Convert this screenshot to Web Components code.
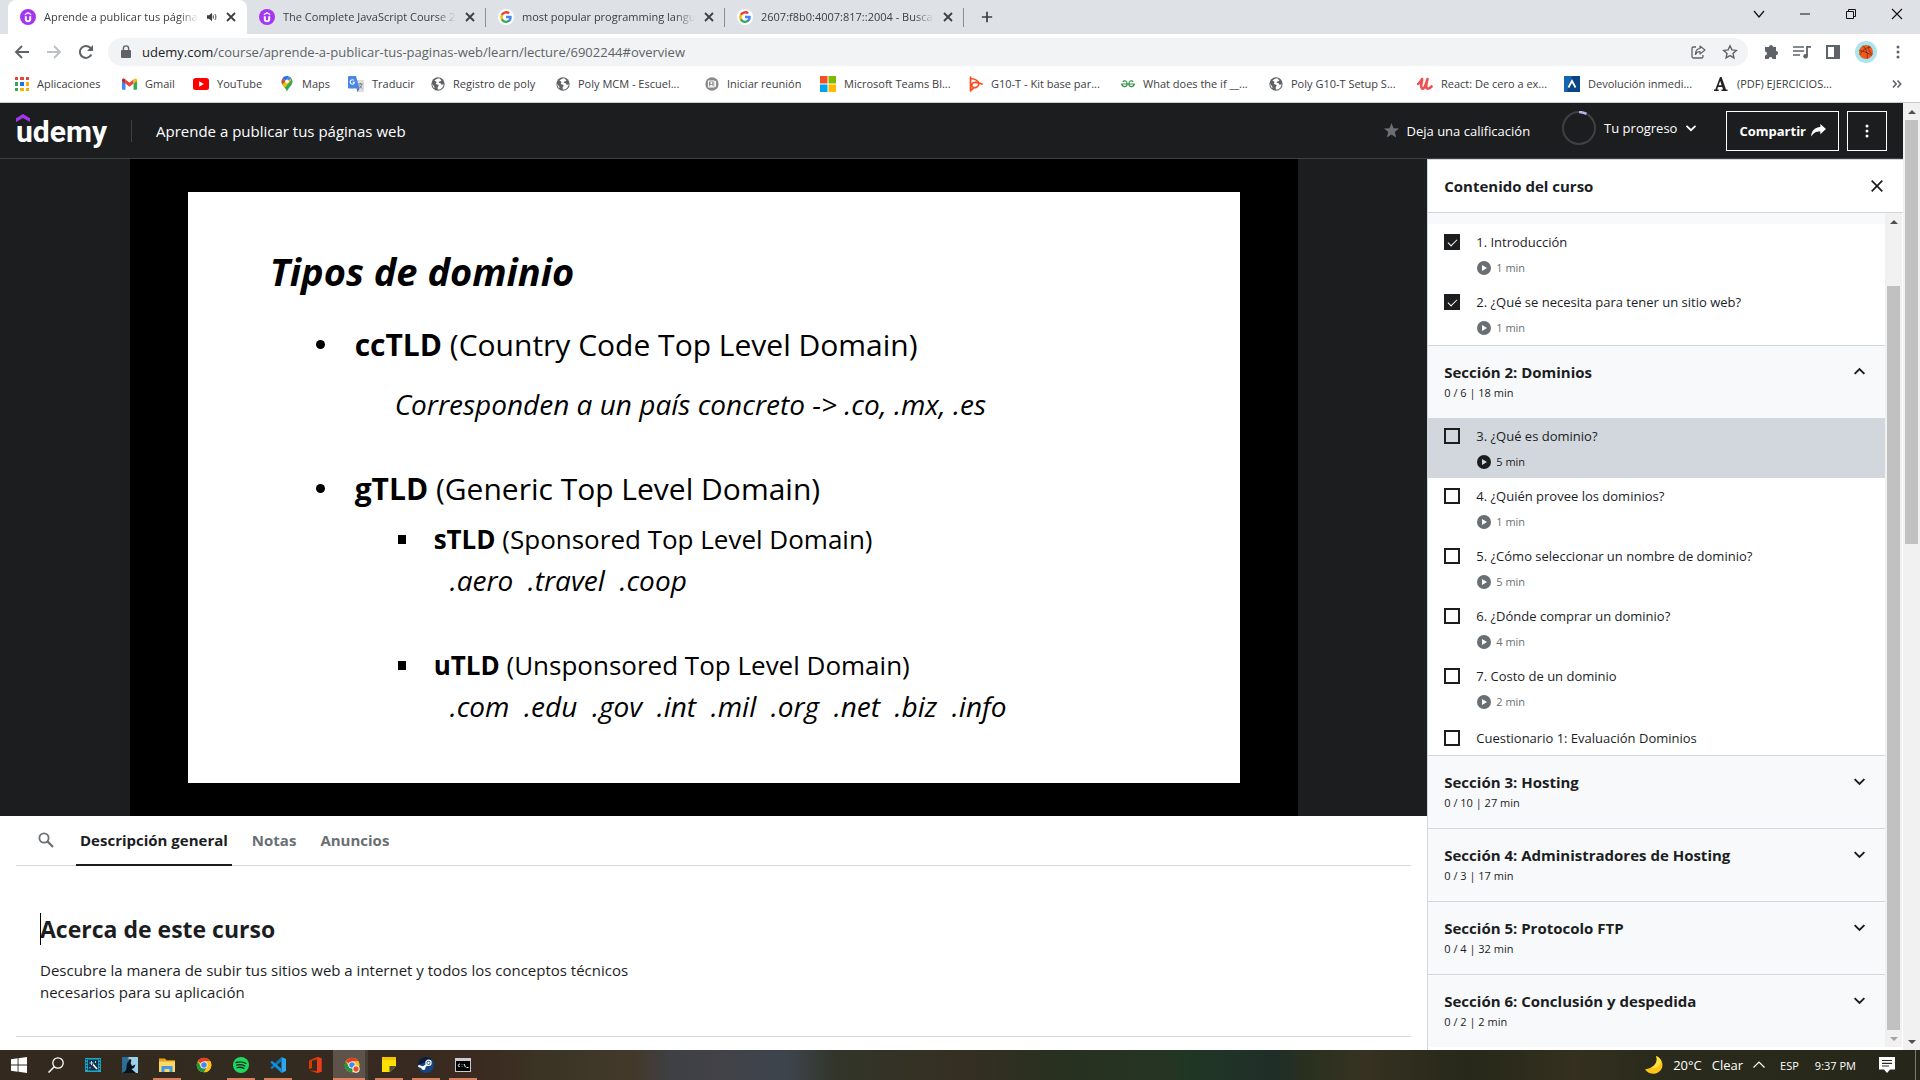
<!DOCTYPE html>
<html lang="es">
<head>
<meta charset="utf-8">
<meta name="viewport" content="width=device-width, initial-scale=1">
<title>Aprende a publicar tus páginas web | Udemy</title>
<style>
  html, body { height: 100%; }
  body {
    margin: 0;
    display: flex;
    flex-direction: column;
    overflow: hidden;
    background: #fff;
    color: #1c1d1f;
    font-family: "Open Sans", "Noto Sans", sans-serif;
    font-size: 13px;
  }
  tab-strip, address-bar, bookmarks-bar, task-bar { flex: none; }
  page-view { flex: 1; min-height: 0; }
</style>
</head>
<body>
<tab-strip></tab-strip>
<address-bar></address-bar>
<bookmarks-bar></bookmarks-bar>
<page-view>
  <course-header slot="header"></course-header>
  <lecture-slide slot="main"></lecture-slide>
  <course-tabs slot="main"></course-tabs>
  <course-about slot="main"></course-about>
  <course-sidebar slot="side">
    <course-section cut>
      <lecture-item done min="1">1. Introducción</lecture-item>
      <lecture-item done min="1">2. ¿Qué se necesita para tener un sitio web?</lecture-item>
    </course-section>
    <course-section open heading="Sección 2: Dominios" info="0 / 6 | 18 min">
      <lecture-item current min="5">3. ¿Qué es dominio?</lecture-item>
      <lecture-item min="1">4. ¿Quién provee los dominios?</lecture-item>
      <lecture-item min="5">5. ¿Cómo seleccionar un nombre de dominio?</lecture-item>
      <lecture-item min="4">6. ¿Dónde comprar un dominio?</lecture-item>
      <lecture-item min="2">7. Costo de un dominio</lecture-item>
      <lecture-item quiz>Cuestionario 1: Evaluación Dominios</lecture-item>
    </course-section>
    <course-section heading="Sección 3: Hosting" info="0 / 10 | 27 min"></course-section>
    <course-section heading="Sección 4: Administradores de Hosting" info="0 / 3 | 17 min"></course-section>
    <course-section heading="Sección 5: Protocolo FTP" info="0 / 4 | 32 min"></course-section>
    <course-section heading="Sección 6: Conclusión y despedida" info="0 / 2 | 2 min"></course-section>
  </course-sidebar>
</page-view>
<task-bar></task-bar>

<script>
const BASE = `
  :host, *, *::before, *::after { box-sizing: border-box; }
  button { font: inherit; color: inherit; background: none; border: 0; padding: 0; margin: 0; }
  a { color: inherit; text-decoration: none; }
  ui-icon { flex: none; }
`;

function define(name, css, html) {
  customElements.define(name, class extends HTMLElement {
    connectedCallback() {
      if (this.shadowRoot) return;
      const body = typeof html === 'function' ? html(this) : html;
      this.attachShadow({ mode: 'open' }).innerHTML = `<style>${BASE}${css}</style>${body}`;
    }
  });
}

/* name: [viewBox, markup] */
const GLOBE = `<circle cx="8" cy="8" r="7.6" fill="#5f6368"/><path d="M9.5 1.3C7.5 1.6 5.300 2.500 4 4.200c.6.8 2 .5 2.300 1.500.2.9-1 1.300-.7 2.200.6.7 2.600.2 3.100 1.300.4 1-.9 1.700-1.100 2.800-.1.7.1 1.700.3 2.400 3.600.1 6.400-2.700 6.500-6.200-.8-.1-1.200.8-2 .6-.9-.3-.7-1.500-1.600-1.800-.7-.2-1.500.1-1.900-.5-.3-.9.700-1.500 1.500-1.600.7-.1 1.500-.4 1.400-1.200-.2-.9-1.500-1.200-2.300-2.400zM1.500 8c.1 2 .9 3.700 2.300 4.900.4-.8.2-1.700-.4-2.400C2.800 9.600 2.200 8.700 1.500 8z" fill="#fff"/>`;
const CHROME = `<circle cx="12" cy="12" r="11" fill="#fbc116"/><path d="M12 12 2.500 6.500A11 11 0 0 1 21.500 6.500H12z" fill="#e33b2e"/><path d="M2.500 6.500A11 11 0 0 0 12 23l4.700-8.300L12 12 7.300 14.700z" fill="#229342"/><path d="M21.600 6.500A11 11 0 0 1 12 23l4.800-8.200L12 6.500z" fill="#fbc116"/><circle cx="12" cy="12" r="5.400" fill="#fff"/><circle cx="12" cy="12" r="4.200" fill="#4285f4"/>`;
const ICONS = {
  udemy: ['0 0 16 16', `<circle cx="8" cy="8" r="8" fill="#a435f0"/><path d="M4.800 4.900 8 3l3.200 1.900v1.500L8 4.600 4.800 6.400z" fill="#fff"/><path d="M4.800 7.200h2v3.100c0 1.500 2.400 1.500 2.400 0V7.200h2v3.300c0 3.600-6.400 3.600-6.400 0z" fill="#fff"/>`],
  google: ['0 0 24 24', `<circle cx="12" cy="12" r="12" fill="#fff"/><path d="M20.600 12.200c0-.7-.1-1.300-.2-1.900H12v3.600h4.800a4.100 4.100 0 0 1-1.800 2.700v2.300h2.900c1.700-1.600 2.700-3.900 2.700-6.700z" fill="#4285f4"/><path d="M12 21c2.400 0 4.500-.8 5.900-2.200L15 16.600c-2.600 1.700-6.400.8-7.600-2.500H4.400v2.300A9 9 0 0 0 12 21z" fill="#34a853"/><path d="M7.400 14.100a5.400 5.400 0 0 1 0-4.200V7.600h-3a9 9 0 0 0 0 8.800z" fill="#fbbc05"/><path d="M12 6.600c1.300 0 2.500.5 3.400 1.300L18 5.300A9 9 0 0 0 4.400 7.600l3 2.300C8 8 9.800 6.600 12 6.600z" fill="#ea4335"/>`],
  close: ['0 0 12 12', `<path d="M2 2l8 8M10 2l-8 8" stroke="currentColor" stroke-width="1.800"/>`],
  thinclose: ['0 0 12 12', `<path d="M1 1l10 10M11 1 1 11" stroke="currentColor" stroke-width="1.100"/>`],
  audio: ['0 0 12 12', `<path d="M0 4h2.500L6 1v10L2.500 8H0z" fill="currentColor"/><path d="M7.500 4v4M9.500 2.500c1.600 2 1.600 5 0 7" stroke="currentColor" stroke-width="1.200" fill="none"/>`],
  plus: ['0 0 14 14', `<path d="M7 1v12M1 7h12" stroke="currentColor" stroke-width="2"/>`],
  down: ['0 0 12 12', `<path d="M1 3l5 6 5-6" stroke="currentColor" stroke-width="1.200" fill="none"/>`],
  minus: ['0 0 12 12', `<path d="M1 6h10" stroke="currentColor" stroke-width="1"/>`],
  restore: ['0 0 12 12', `<path d="M1.500 3.500h7v7h-7zM3.500 3.500v-2h7v7h-2" stroke="currentColor" fill="none"/>`],
  back: ['0 0 16 16', `<path d="M15 8H2.500M8 2 2 8l6 6" stroke="currentColor" stroke-width="1.900" fill="none"/>`],
  forward: ['0 0 16 16', `<path d="M1 8h12.500M8 2l6 6-6 6" stroke="currentColor" stroke-width="1.900" fill="none"/>`],
  reload: ['0 0 16 16', `<path d="M13.300 10.500A6 6 0 1 1 12.300 3.800L14 5.500" stroke="currentColor" stroke-width="2" fill="none"/><path d="M15 1v6H9z" fill="currentColor"/>`],
  lock: ['0 0 10 14', `<rect y="5" width="10" height="8" rx="1" fill="currentColor"/><path d="M2.400 6V3.500a2.600 2.600 0 0 1 5.200 0V6" stroke="currentColor" stroke-width="1.400" fill="none"/>`],
  share: ['0 0 16 16', `<path d="M6 3H3.500A1.500 1.500 0 0 0 2 4.500v8A1.500 1.500 0 0 0 3.500 14h8a1.500 1.500 0 0 0 1.500-1.500V11" stroke="currentColor" stroke-width="1.300" fill="none"/><path d="M10 2l5 4-5 4V7.500c-2.500 0-3.700 1-4.500 3C5.500 7 7 4.700 10 4.500z" stroke="currentColor" stroke-width="1.200" fill="none" stroke-linejoin="round"/>`],
  star: ['0 0 16 16', `<path d="M8 1.800l1.900 4.100 4.400.5-3.300 3 .9 4.400L8 11.600l-3.900 2.200.9-4.400-3.300-3 4.400-.5z" stroke="currentColor" stroke-width="1.400" fill="none"/>`],
  starfill: ['0 0 16 16', `<path d="M8 0l2.200 5.500 5.800.4-4.500 3.700 1.500 5.800L8 12.200l-5 3.200 1.500-5.800L0 5.900l5.800-.4z" fill="currentColor"/>`],
  puzzle: ['0 0 16 16', `<path d="M6 3a2 2 0 0 1 4 0h3v4a2 2 0 0 1 0 4.200V15H9.500a1.900 1.900 0 0 0-3.800 0H2v-3.500a2 2 0 0 0 0-4V3z" fill="currentColor"/>`],
  queue: ['0 0 18 16', `<path d="M0 3h11M0 7h11M0 11h7" stroke="currentColor" stroke-width="1.700"/><path d="M14 12V2.800h4" stroke="currentColor" stroke-width="1.800" fill="none"/><circle cx="12.600" cy="12.200" r="2.300" fill="currentColor"/>`],
  panel: ['0 0 16 16', `<path d="M2 2h12v12H2z" stroke="currentColor" stroke-width="2" fill="none"/><path d="M9 2h5v12H9z" fill="currentColor"/>`],
  avatar: ['0 0 22 22', `<circle cx="11" cy="11" r="11" fill="#a9e5ec"/><circle cx="11" cy="11" r="7" fill="#ee5a20"/><path d="M4.200 9.500c4 .5 9.500 2.500 12.500 5M8 4.800c3 3 5 8 4.300 12.800M4.800 14c2.200-4.500 6-7.500 11-8M14 4.800c-1 3.500.5 7 3.500 8.500" stroke="#6b2412" fill="none" stroke-width=".7"/>`],
  dots: ['0 0 4 16', `<circle cx="2" cy="3" r="1.500" fill="currentColor"/><circle cx="2" cy="8" r="1.500" fill="currentColor"/><circle cx="2" cy="13" r="1.500" fill="currentColor"/>`],
  apps: ['0 0 14 14', `<path d="M0 0h3v3H0zM5 0h4v3H5zM11 0h3v3h-3z" fill="#ea4335"/><path d="M0 5h3v4H0z" fill="#34a853"/><path d="M5 5h4v4H5z" fill="#1a73e8"/><path d="M11 5h3v4h-3z" fill="#fbaf05"/><path d="M0 11h3v3H0z" fill="#34a853"/><path d="M5 11h4v3H5zM11 11h3v3h-3z" fill="#fbaf05"/>`],
  gmail: ['0 0 16 12', `<path d="M0 1.500V11a1 1 0 0 0 1 1h2.700V5z" fill="#4285f4"/><path d="M16 1.500V11a1 1 0 0 1-1 1h-2.700V5z" fill="#34a853"/><path d="M3.700 1.200 8 4.600l4.300-3.400v4.300L8 9 3.700 5.500z" fill="#ea4335"/><path d="M0 1.800C0 0 2-.5 3.700 1.200v4.300L0 2.800z" fill="#c5221f"/><path d="M16 1.800C16 0 14-.5 12.300 1.200v4.300L16 2.800z" fill="#fbbc04"/>`],
  youtube: ['0 0 16 12', `<rect width="16" height="12" rx="2.500" fill="#f00"/><path d="M6.200 3.300v5.400L10.800 6z" fill="#fff"/>`],
  maps: ['0 0 12 16', `<path d="M6 16C5.300 12 .5 9.800.5 5.500L9 1.200c1.500.8 2.500 2.400 2.500 4.300C11.500 9.800 6.700 12 6 16z" fill="#34a853"/><path d="M6 0C4 0 2.300.9 1.500 2.300L4.300 4.600 8 .4C7.400.1 6.700 0 6 0z" fill="#1a73e8"/><path d="M1.500 2.300C.1 4.300.3 6.500 1.300 8.300L4.300 4.600z" fill="#ea4335"/><path d="M1.300 8.300c.7 1.200 1.600 2.300 2.500 3.400l6-7c.5-.9.400-1.600 0-2.500z" fill="#fbbc04"/><path d="M8 .4 4.300 4.600 6 6.700l4.200-4.900A5 5 0 0 0 8 .4z" fill="#4285f4"/><circle cx="6" cy="5.300" r="1.900" fill="#fff"/>`],
  translate: ['0 0 16 16', `<path d="M6 4h9a1 1 0 0 1 1 1v10a1 1 0 0 1-1 1H9z" fill="#dcdcdc"/><path d="M1 0h7l3.500 12.500H1a1 1 0 0 1-1-1V1a1 1 0 0 1 1-1z" fill="#4a86e8"/><path d="M9 12.500h2.500L9.500 16z" fill="#2a56c6"/><path d="M7 5.700H4.600v1.100h1.200c-.4 1.600-3 1.300-3-.7 0-1.700 1.700-2.200 2.700-1.300l.8-.8C4.500 2.300 1.600 3.500 1.600 6.100c0 3.300 5.600 3.600 5.400-.4z" fill="#fff"/><path d="M10.500 8h4M12.500 7v1M14 8c-.4 1.500-1.500 3-2.500 4M11.500 9.500l2.500 3" stroke="#66757f" stroke-width=".9" fill="none"/>`],
  globe: ['0 0 16 16', GLOBE],
  person: ['0 0 16 16', `<circle cx="8" cy="8" r="7.600" fill="#8a8a8a"/><path d="M12 4.500V11M4 4.500h6.500v7H4z" fill="none" stroke="#fff" stroke-width="1.200"/><circle cx="7.300" cy="7" r="1.200" fill="#fff"/><path d="M5 11c.3-2.500 4.300-2.500 4.600 0z" fill="#fff"/>`],
  windows4: ['0 0 16 16', `<path d="M0 0h7.500v7.500H0z" fill="#f25022"/><path d="M8.500 0H16v7.500H8.500z" fill="#7fba00"/><path d="M0 8.500h7.500V16H0z" fill="#00a4ef"/><path d="M8.500 8.500H16V16H8.500z" fill="#ffb900"/>`],
  genially: ['0 0 14 16', `<path d="M1.500 1v14M1.500 2.500c4 .5 8 2.500 8.300 5.300C10 11 6 12.500 3.500 11c-1.500-1.500-.5-4 1.500-4.500 2.500-.3 5.500.5 8 1.500M4 12.500l-2.500 2" stroke="#ff4a1c" stroke-width="1.700" fill="none" stroke-linecap="round"/>`],
  geeks: ['0 0 16 10', `<path d="M0 5h16M2 2.500C4 .5 7 1.500 7 5s-4.500 4-6 1V5M14 2.500C12 .5 9 1.500 9 5s4.500 4 6 1V5" stroke="#2f8d46" stroke-width="1.300" fill="none"/>`],
  udred: ['0 0 16 16', `<path d="M1 8c1.500-1 3-3 4-5 .8 2-2.500 8 0 9.500C7.500 13.500 9.500 7 10.500 3M10.500 3C9.500 7 8.500 11 10 12.500c1.500 1 3-.5 4.500-2" stroke="#ec5252" stroke-width="2.600" fill="none" stroke-linecap="round" stroke-linejoin="round"/>`],
  caret: ['0 0 16 16', `<path d="M0 0h16v16H0z" fill="#1566ae"/><path d="M8 0h8v16H3z" fill="#0a4586"/><path d="M4.500 11.500 8 5l3.500 6.500" stroke="#fff" stroke-width="1.800" fill="none"/>`],
  academia: ['0 0 16 16', `<path d="M8.600 1 13 13.500h1.500V15h-6v-1.500H10L9.200 11H5l-.8 2.500h1.500V15H1v-1.500h1.300L7 1zM5.600 9.300h3L7.200 5z" fill="#222" fill-rule="evenodd"/>`],
  more: ['0 0 10 10', `<path d="M1 1.500 4.200 5 1 8.500M5.500 1.500 8.700 5 5.500 8.500" stroke="currentColor" stroke-width="1.600" fill="none"/>`],
  hat: ['0 0 14 8', `<path d="M0 4.200 7 0l7 4.200V8L7 3.900 0 8z" fill="#a435f0"/>`],
  ring: ['0 0 34 34', `<circle cx="17" cy="17" r="16" fill="none" stroke="#3e4143" stroke-width="2"/><path d="M17 1a16 16 0 0 1 7.500 1.900" stroke="#c0b0f0" stroke-width="2.400" fill="none"/>`],
  chev: ['0 0 12 12', `<path d="M1.500 3.800 6 8.200l4.500-4.400" stroke="currentColor" stroke-width="1.800" fill="none"/>`],
  chevup: ['0 0 12 12', `<path d="M1.500 8.200 6 3.800l4.500 4.400" stroke="currentColor" stroke-width="1.800" fill="none"/>`],
  reply: ['0 0 16 14', `<path d="M10 0l6 5.500-6 5.500V8C6 7.800 3 8.800 0 13.500.3 8 3.500 3.800 10 3.300z" fill="currentColor"/>`],
  search: ['0 0 16 16', `<circle cx="6" cy="6" r="4.600" stroke="currentColor" stroke-width="1.800" fill="none"/><path d="M9.400 9.400 15 15" stroke="currentColor" stroke-width="2.200"/>`],
  play: ['0 0 14 14', `<circle cx="7" cy="7" r="7" fill="currentColor"/><path d="M5 4v6l5-3z" fill="var(--hole, #fff)"/>`],
  x: ['0 0 12 12', `<path d="M.7.7l10.600 10.600M11.300.7.7 11.300" stroke="currentColor" stroke-width="1.700"/>`],
  win: ['0 0 16 16', `<path d="M0 2.300 6.600 1.300v6.200H0zM7.500 1.200 16 0v7.500H7.500zM0 8.400h6.600v6.300L0 13.700zM7.500 8.400H16V16l-8.500-1.200z" fill="#fff"/>`],
  find: ['0 0 16 16', `<circle cx="10" cy="6" r="5.200" stroke="#fff" stroke-width="1.300" fill="none"/><path d="M6.300 9.800.5 15.500" stroke="#fff" stroke-width="1.500"/>`],
  film: ['0 0 16 16', `<path d="M0 1h16v14H0z" fill="#1aa9c8"/><path d="M3 2.500h10v11H3z" fill="#16344f"/><path d="M1.500 2v12M14.500 2v12" stroke="#06323e" stroke-width="1.400" stroke-dasharray="1.500 1.500"/><path d="M8 7.500l4 4.500" stroke="#fff" stroke-width="1.600"/><path d="M6.500 4v4M4.500 6h4M10.500 4v2M5 10v1.500" stroke="#bfeeff" stroke-width=".9"/>`],
  kindle: ['0 0 16 16', `<path d="M0 0h16v16H0z" fill="#9bd0ea"/><path d="M0 0h6.500v16H0z" fill="#2b6f96"/><path d="M0 16c2.500-1 4-2 4.500-5 0-3 .5-5.500 2-6.500-.8-2.500 2.800-3 2.800-.7 0 1.200-.8 1.700-.5 2.700L10 9l3.500-1.500L12 11l-2.500 1L14 16z" fill="#06121c"/>`],
  folder: ['0 0 16 16', `<path d="M0 1.500h6l1.500 1.800H16V14H0z" fill="#e8a317"/><path d="M0 4.500h16V15H0z" fill="#ffd766"/><path d="M2.500 15V9h11v6h-3v-3h-5v3z" fill="#3f9be6"/>`],
  chrome: ['0 0 24 24', CHROME],
  chrome2: ['0 0 24 24', CHROME + `<circle cx="18" cy="18" r="5.500" fill="#fff"/><circle cx="18" cy="18" r="4" fill="#e8501e"/>`],
  spotify: ['0 0 16 16', `<circle cx="8" cy="8" r="8" fill="#1ed760"/><path d="M3.200 5.500c3-1 6.800-.7 9.600.9M3.700 8.100c2.600-.8 5.600-.5 8.100.9M4.200 10.600c2.200-.6 4.600-.4 6.700.8" stroke="#10291a" stroke-width="1.400" fill="none" stroke-linecap="round"/>`],
  vscode: ['0 0 16 16', `<path d="M11.500 0 16 2v12l-4.500 2z" fill="#2ba8f0"/><path d="M11.500 0v4.200L2 12.200.3 10.800z" fill="#0a7bc8"/><path d="M11.500 16v-4.200L2 3.800.3 5.200z" fill="#1390df"/>`],
  office: ['0 0 16 16', `<path d="M2 3.500 10 0l4.500 1.300v13.400L10 16l-8-2.800 8 .9V2.500L5 3.800V11l-3 1.300z" fill="#d83b01"/><path d="M10 0l4.500 1.300v13.400L10 16z" fill="#eb3c1b"/>`],
  sticky: ['0 0 16 16', `<path d="M1 0h14v9l-6 6H1z" fill="#ffe000"/><path d="M1 0h14v3H1z" fill="#f5c400"/><path d="M8.500 9H15l-6.500 6.500z" fill="#4b4a43"/>`],
  steam: ['0 0 16 16', `<circle cx="8" cy="8" r="8" fill="#14457f"/><path d="M0 8a8 8 0 0 1 13.700-5.600L3 7z" fill="#0b1c3d"/><circle cx="10.500" cy="5.800" r="2.600" stroke="#fff" stroke-width="1.200" fill="none"/><circle cx="10.500" cy="5.800" r="1.300" fill="#fff"/><path d="M.3 8.800 5 10.800 9 7.500" stroke="#fff" stroke-width="2.200" fill="none"/><circle cx="5.500" cy="11" r="2" fill="#fff"/>`],
  cmd: ['0 0 16 14', `<path d="M0 0h16v14H0z" fill="#c8ccd0"/><path d="M1 3h14v10H1z" fill="#000"/><path d="M5 6.300c-2-1-2.500 3-.2 2.300M7 6.500v.5M7 8.500V9M9 6l1.500 3.200M11.500 9.500h2" stroke="#fff" fill="none"/>`],
  moon: ['0 0 18 18', `<path d="M11 0c2.500 5-1 12-11 13.500C4 19 13 19.500 16.500 13 19 8 16.500 2 11 0z" fill="#ffc414"/><path d="M11 0c2.500 5-1 10.500-5 12 6 1 10.500-3 10-7C15 2.500 13.500 1 11 0z" fill="#ffe146"/>`],
  tray: ['0 0 12 12', `<path d="M.5 8.500 6 3l5.500 5.500" stroke="#fff" stroke-width="1.200" fill="none"/>`],
  note: ['0 0 16 16', `<path d="M0 0h16v12.500h-5L8 16l-3-3.500H0z" fill="#fff"/><path d="M3 3.500h10M3 6.300h10M3 9h7" stroke="#2a2b1c" stroke-width="1.200"/>`]
};

customElements.define('ui-icon', class extends HTMLElement {
  connectedCallback() {
    if (this.shadowRoot) return;
    const [box, art] = ICONS[this.getAttribute('name')];
    const w = this.getAttribute('w') || 16, h = this.getAttribute('h') || w;
    this.attachShadow({ mode: 'open' }).innerHTML =
      `<style>:host{display:inline-flex;width:${w}px;height:${h}px}svg{display:block;width:100%;height:100%}</style>
       <svg viewBox="${box}" aria-hidden="true">${art}</svg>`;
  }
});

/* ---------- browser frame ---------- */
define('browser-tab', `
  :host { display: flex; align-items: center; gap: 8px; flex: 0 1 239px; min-width: 0; height: 34px; padding: 0 10px 0 12px; position: relative; font-size: 11px; color: #3c4043; }
  :host([active]) { background: #fff; border-radius: 8px 8px 0 0; }
  :host([rule])::after { content: ""; position: absolute; right: 0; top: 8px; height: 19px; width: 1px; background: #8a8d91; }
  .t { flex: 1; min-width: 0; overflow: hidden; white-space: nowrap; line-height: 20px; mask-image: linear-gradient(90deg, #000 calc(100% - 20px), transparent); }
  button { display: flex; }
`, el => `<ui-icon name="${el.getAttribute('icon')}"></ui-icon><span class="t"><slot></slot></span>
  ${el.hasAttribute('active') ? '<ui-icon name="audio" w="10"></ui-icon>' : ''}
  <button aria-label="Cerrar pestaña"><ui-icon name="close" w="12"></ui-icon></button>`);

define('tab-strip', `
  :host { display: flex; align-items: center; height: 34px; padding-left: 8px; background: #dee1e6; color: #3c4043; }
  .new { display: flex; margin-left: 17px; }
  .win { margin-left: auto; display: flex; gap: 34px; padding: 0 17px 6px 0; color: #111; }
  .win button { display: flex; }
`, `<browser-tab active icon="udemy">Aprende a publicar tus páginas web</browser-tab>
  <browser-tab icon="udemy" rule>The Complete JavaScript Course 2022</browser-tab>
  <browser-tab icon="google" rule>most popular programming languages</browser-tab>
  <browser-tab icon="google" rule>2607:f8b0:4007:817::2004 - Buscar con</browser-tab>
  <button class="new" aria-label="Nueva pestaña"><ui-icon name="plus" w="12"></ui-icon></button>
  <div class="win"><button aria-label="Buscar pestañas"><ui-icon name="down" w="12"></ui-icon></button>
  <button aria-label="Minimizar"><ui-icon name="minus" w="12"></ui-icon></button>
  <button aria-label="Restaurar"><ui-icon name="restore" w="12"></ui-icon></button>
  <button aria-label="Cerrar"><ui-icon name="thinclose" w="12"></ui-icon></button></div>`);

define('address-bar', `
  :host { display: flex; align-items: center; height: 36px; padding: 0 20px 0 14px; background: #fff; color: #5f6368; }
  button { display: flex; }
  .nav { display: flex; gap: 16px; margin-right: 14px; }
  .off { color: #bdc1c6; }
  .pill { flex: 1; display: flex; align-items: center; height: 28px; border-radius: 14px; background: #f1f3f4; padding: 0 10px 0 13px; gap: 10px; font-size: 13px; }
  .url { flex: 1; white-space: nowrap; padding-left: 1px; }
  .url b { font-weight: 400; color: #202124; }
  .pill button + button { margin-left: 6px; }
  .ext { display: flex; align-items: center; gap: 14px; margin-left: 15px; }
  .me { margin-right: 5px; }
`, `<div class="nav"><button aria-label="Atrás"><ui-icon name="back"></ui-icon></button><button class="off" aria-label="Adelante"><ui-icon name="forward"></ui-icon></button><button aria-label="Recargar"><ui-icon name="reload"></ui-icon></button></div>
  <div class="pill"><ui-icon name="lock" w="10" h="14"></ui-icon><span class="url"><b>udemy.com</b>/course/aprende-a-publicar-tus-paginas-web/learn/lecture/6902244#overview</span>
  <button aria-label="Compartir página"><ui-icon name="share"></ui-icon></button><button aria-label="Marcador"><ui-icon name="star"></ui-icon></button></div>
  <div class="ext"><button aria-label="Extensiones"><ui-icon name="puzzle"></ui-icon></button><button aria-label="Multimedia"><ui-icon name="queue" w="18" h="16"></ui-icon></button><button aria-label="Panel lateral"><ui-icon name="panel" w="16"></ui-icon></button><button class="me" aria-label="Perfil"><ui-icon name="avatar" w="22"></ui-icon></button><button aria-label="Menú"><ui-icon name="dots" w="4" h="16"></ui-icon></button></div>`);

define('bookmark-link', `
  :host { display: block; min-width: 0; }
  a { display: flex; align-items: center; gap: 8px; white-space: nowrap; line-height: 20px; }
`, el => `<a href="#"><ui-icon name="${el.getAttribute('icon')}" w="${el.getAttribute('w') || 16}" h="${el.getAttribute('h') || 16}"></ui-icon><slot></slot></a>`);

define('bookmarks-bar', `
  :host { display: grid; grid-template-columns: 107px 71px 87px 68px 83px 125px 149px 115px 149px 152px 148px 148px 147px 149px 1fr auto; align-items: center; height: 33px; padding: 0 18px 4px 15px; background: #fff; border-bottom: 1px solid #c9cccf; font-size: 11px; color: #3c4043; }
  .more { display: flex; color: #5f6368; }
`, `<bookmark-link icon="apps" w="14" h="14">Aplicaciones</bookmark-link>
  <bookmark-link icon="gmail" h="12" w="15">Gmail</bookmark-link>
  <bookmark-link icon="youtube" h="12">YouTube</bookmark-link>
  <bookmark-link icon="maps" w="14">Maps</bookmark-link>
  <bookmark-link icon="translate">Traducir</bookmark-link>
  <bookmark-link icon="globe" w="14">Registro de poly</bookmark-link>
  <bookmark-link icon="globe" w="14">Poly MCM - Escuel...</bookmark-link>
  <bookmark-link icon="person" w="14">Iniciar reunión</bookmark-link>
  <bookmark-link icon="windows4">Microsoft Teams Bl...</bookmark-link>
  <bookmark-link icon="genially" w="14">G10-T - Kit base par...</bookmark-link>
  <bookmark-link icon="geeks" h="10" w="14">What does the if __...</bookmark-link>
  <bookmark-link icon="globe" w="14">Poly G10-T Setup S...</bookmark-link>
  <bookmark-link icon="udred">React: De cero a ex...</bookmark-link>
  <bookmark-link icon="caret">Devolución inmedi...</bookmark-link>
  <bookmark-link icon="academia">(PDF) EJERCICIOS...</bookmark-link>
  <button class="more" aria-label="Más marcadores"><ui-icon name="more" w="10"></ui-icon></button>`);

/* ---------- page scaffolding ---------- */
define('scroll-bar', `
  :host { display: flex; flex-direction: column; width: 17px; flex: none; background: #f1f1f1; padding: 0 2px; }
  i { height: 17px; flex: none; display: grid; place-items: center; color: #505050; }
  i::before { content: ""; border: 4px solid transparent; border-top-width: 0; border-bottom-color: currentColor; }
  i:last-child::before { border-width: 4px 4px 0; border-color: currentColor transparent; }
  :host([dim=top]) i:first-child, :host([dim=end]) i:last-child { color: #a3a3a3; }
  b { background: #c1c1c1; }
`, el => { const [a, b, c] = el.getAttribute('parts').split(' ');
  return `<i></i><span style="flex:${a} 0 0px"></span><b style="flex:${b} 0 0px"></b><span style="flex:${c} 0 0px"></span><i></i>`; });

define('page-view', `
  :host { display: flex; }
  .page { flex: 1; min-width: 0; display: flex; flex-direction: column; }
  .cols { flex: 1; min-height: 0; display: flex; }
  main { flex: 3; min-width: 0; overflow: hidden; }
  aside { flex: 1; min-width: 0; display: flex; }
  ::slotted(course-sidebar) { flex: 1; }
`, `<div class="page"><slot name="header"></slot><div class="cols"><main><slot name="main"></slot></main><aside><slot name="side"></slot></aside></div></div>
  <scroll-bar dim="top" parts="0 424 489"></scroll-bar>`);

define('course-header', `
  :host { display: flex; align-items: center; height: 56px; flex: none; padding: 0 16px; background: #1c1d1f; color: #fff; border-bottom: 1px solid #3e4143; font-size: 13px; }
  .logo { display: flex; flex-direction: column; font: 700 30px/28px Roboto, sans-serif; padding-bottom: 2px; }
  .logo ui-icon { margin-bottom: -4px; }
  .course { border-left: 1px solid #3e4143; margin-left: 24px; padding-left: 24px; font-size: 15px; line-height: 22px; margin-right: auto; }
  .rate, .prog { display: flex; align-items: center; gap: 8px; }
  .rate { color: #6a6f73; margin-right: 32px; }
  .rate span { color: #fff; }
  .prog { margin-right: 21px; padding-bottom: 6px; }
  .box { display: flex; align-items: center; justify-content: center; height: 40px; border: 1px solid #fff; padding: 0 12px; gap: 5px; font-weight: 700; margin-left: 8px; }
  .dots { width: 40px; }
`, `<a class="logo" href="#" aria-label="Udemy"><ui-icon name="hat" w="14" h="8"></ui-icon><span>udemy</span></a>
  <a class="course" href="#">Aprende a publicar tus páginas web</a>
  <button class="rate"><ui-icon name="starfill" w="15"></ui-icon><span>Deja una calificación</span></button>
  <button class="prog"><ui-icon name="ring" w="34"></ui-icon><span>Tu progreso</span><ui-icon name="chev" w="12"></ui-icon></button>
  <button class="box">Compartir<ui-icon name="reply" w="15" h="13"></ui-icon></button>
  <button class="box dots" aria-label="Más opciones"><ui-icon name="dots" w="4" h="16"></ui-icon></button>`);

define('lecture-slide', `
  :host { display: flex; justify-content: center; background: #1c1d1f; height: 657px; color: #000; }
  .video { height: 100%; aspect-ratio: 16 / 9; background: #000; padding: 33px 58px; display: flex; }
  .slide { flex: 1; background: #fff; padding: 53px 0 0 82px; overflow: hidden; }
  h1, ul, li, p { margin: 0; padding: 0; list-style: none; font-weight: 400; }
  h1 { font: italic 700 38px/52px "Open Sans", sans-serif; margin-bottom: 27px; }
  .row { display: flex; align-items: center; height: 40px; font-size: 30px; white-space: nowrap; }
  .row::before { content: ""; width: 9px; height: 9px; border-radius: 50%; background: #000; margin: 0 30px 0 46px; }
  .top > li + li { margin-top: 44px; }
  .note { font: italic 28px/40px "Open Sans", sans-serif; margin: 20px 0 0 125px; }
  .sub { margin: 11px 0 0 128px; }
  .sub li + li { margin-top: 44px; }
  .sub .row { font-size: 26px; }
  .sub .row::before { width: 8px; height: 9px; border-radius: 0; margin: 0 28px 0 0; }
  .ext { font: italic 28px/42px "Open Sans", sans-serif; margin-left: 52px; white-space: pre; }
`, `<div class="video"><article class="slide"><h1>Tipos de dominio</h1>
  <ul class="top"><li><div class="row"><span><b>ccTLD</b> (Country Code Top Level Domain)</span></div><p class="note">Corresponden a un país concreto -&gt; .co, .mx, .es</p></li>
  <li><div class="row"><span><b>gTLD</b> (Generic Top Level Domain)</span></div>
  <ul class="sub"><li><div class="row"><span><b>sTLD</b> (Sponsored Top Level Domain)</span></div><p class="ext">.aero  .travel  .coop</p></li>
  <li><div class="row"><span><b>uTLD</b> (Unsponsored Top Level Domain)</span></div><p class="ext">.com  .edu  .gov  .int  .mil  .org  .net  .biz  .info</p></li></ul></li></ul></article></div>`);

define('course-tabs', `
  :host { display: flex; align-items: stretch; gap: 16px; height: 50px; margin: 0 16px; padding-left: 22px; border-bottom: 1px solid #d1d7dc; color: #6a6f73; font-size: 15px; font-weight: 700; }
  button { padding: 0 4px; margin-bottom: -1px; border-bottom: 2px solid transparent; }
  .find { padding: 0; margin-right: 6px; display: flex; align-items: center; }
  .on { color: #1c1d1f; border-color: #1c1d1f; }
`, `<button class="find" aria-label="Buscar"><ui-icon name="search" w="16"></ui-icon></button><button class="on">Descripción general</button><button>Notas</button><button>Anuncios</button>`);

define('course-about', `
  :host { display: block; margin: 0 16px; padding: 47px 24px 33px; border-bottom: 1px solid #d1d7dc; }
  h2 { margin: 0 0 14px; font-size: 23px; line-height: 32px; position: relative; }
  h2::before { content: ""; position: absolute; left: 0; top: 0; width: 1px; height: 32px; background: #000; }
  p { margin: 0; font-size: 15px; line-height: 22px; max-width: 600px; }
`, `<h2>Acerca de este curso</h2><p>Descubre la manera de subir tus sitios web a internet y todos los conceptos técnicos necesarios para su aplicación</p>`);

define('course-sidebar', `
  :host { display: flex; flex-direction: column; min-width: 0; border: solid #d1d7dc; border-width: 1px 0 0 1px; padding-bottom: 3px; background: #fff; }
  header { display: flex; align-items: center; justify-content: space-between; height: 53px; flex: none; padding: 0 20px 0 16px; border-bottom: 1px solid #d1d7dc; }
  h2 { margin: 0; font-size: 15px; line-height: 20px; }
  header button { display: flex; }
  .body { flex: 1; min-height: 0; display: flex; padding-right: 1px; }
  .list { flex: 1; overflow: hidden; }
`, `<header><h2>Contenido del curso</h2><button aria-label="Cerrar"><ui-icon name="x" w="12"></ui-icon></button></header>
  <div class="body"><div class="list"><slot></slot></div><scroll-bar dim="end" parts="56 744 0"></scroll-bar></div>`);

define('course-section', `
  :host { display: block; border-top: 1px solid #d1d7dc; }
  :host([cut]) { border-top: 11px solid #f7f9fa; padding-bottom: 1px; }
  h3 { margin: 0; font-size: 15px; }
  button { display: flex; justify-content: space-between; align-items: flex-start; width: 100%; height: 72px; padding: 16px 19px 0 16px; background: #f7f9fa; text-align: left; }
  .t { display: grid; gap: 3px; line-height: 20px; }
  small { font-size: 11px; font-weight: 400; line-height: 16px; }
  ui-icon { margin-top: 3px; }
`, el => (el.hasAttribute('cut') ? '' : `<h3><button aria-expanded="${el.hasAttribute('open')}"><span class="t"><span>${el.getAttribute('heading')}</span><small>${el.getAttribute('info')}</small></span><ui-icon name="${el.hasAttribute('open') ? 'chevup' : 'chev'}" w="13"></ui-icon></button></h3>`) + '<slot></slot>');

define('lecture-item', `
  :host { display: block; color: #1c1d1f; font-size: 13px; }
  label { display: grid; grid-template-columns: 16px 1fr; column-gap: 16px; row-gap: 6px; align-items: center; line-height: 20px; padding: 8px 16px 6px; }
  :host([quiz]) label { padding: 10px 16px 7px; }
  :host([current]) { background: #d1d7dc; --hole: #d1d7dc; }
  input { appearance: none; width: 16px; height: 16px; margin: 0; border: 2px solid #1c1d1f; display: grid; place-items: center; }
  input:checked { background: #1c1d1f; }
  input:checked::after { content: ""; width: 9px; height: 5px; border: solid #fff; border-width: 0 0 1px 1px; transform: translateY(-1px) rotate(-45deg); }
  small { grid-column: 2; display: flex; align-items: center; gap: 5px; padding-left: 1px; font-size: 11px; color: #6a6f73; }
  :host([current]) small { color: #1c1d1f; }
`, el => `<label><input type="checkbox" ${el.hasAttribute('done') ? 'checked' : ''}><span><slot></slot></span>${el.hasAttribute('min') ? `<small><ui-icon name="play" w="14"></ui-icon>${el.getAttribute('min')} min</small>` : ''}</label>`);

/* ---------- taskbar ---------- */
define('task-button', `
  :host { display: block; width: 37px; height: 30px; }
  button { width: 100%; height: 100%; display: grid; place-items: center; }
  :host([running]) button { background: linear-gradient(#d9805f, #d9805f) center bottom / 28px 2px no-repeat; }
  :host([active]) button { background: linear-gradient(#e0845f, #e0845f) left bottom / 32px 2px no-repeat, linear-gradient(90deg, #5d534b 32px, #453c35 32px 35px, transparent 35px); }
`, el => `<button aria-label="${el.getAttribute('label')}"><ui-icon name="${el.getAttribute('icon')}" w="16"></ui-icon></button>`);

define('task-bar', `
  :host { display: flex; height: 30px; color: #fff; font-size: 13px;
    background: linear-gradient(90deg, #33291f, #332a20 15%, #3b2a20 25%, #3a3424 28.500%, #43392a 33%, #3e4045 35%, #424248 37.500%, #3d444d 41%, #33352a 43.500%, #352f22 50%, #283020 55%, #253523 61%, #203624 62%, #203328 64%, #1f2e28 66.500%, #29301f 68%, #373222 71%, #262819 76.500%, #35301f 82%, #2a2b1c 86%, #26271a); }
  .tray { margin-left: auto; display: flex; align-items: center; border-right: 1px solid #7b7b72; margin-right: 4px; padding-right: 20px; }
  .tray > * { margin-left: 10px; }
  .s { font-size: 11px; margin-left: 15px; }
  .time { margin-left: 16px; }
  .note { margin-left: 23px; }
`, `<task-button icon="win" label="Inicio"></task-button><task-button icon="find" label="Buscar"></task-button><task-button icon="film" label="Editor de video"></task-button><task-button icon="kindle" label="Kindle"></task-button><task-button icon="folder" label="Explorador" running></task-button><task-button icon="chrome" label="Chrome"></task-button><task-button icon="spotify" label="Spotify" running></task-button><task-button icon="vscode" label="Visual Studio Code" running></task-button><task-button icon="office" label="Office"></task-button><task-button icon="chrome2" label="Chrome" active></task-button><task-button icon="sticky" label="Notas rápidas" running></task-button><task-button icon="steam" label="Steam" running></task-button><task-button icon="cmd" label="Símbolo del sistema" running></task-button>
  <div class="tray"><ui-icon name="moon" w="18"></ui-icon><span>20°C</span><span>Clear</span><ui-icon name="tray" w="12"></ui-icon><span class="s">ESP</span><span class="s time">9:37 PM</span><ui-icon class="note" name="note" w="16"></ui-icon></div>`);
</script>
</body>
</html>
